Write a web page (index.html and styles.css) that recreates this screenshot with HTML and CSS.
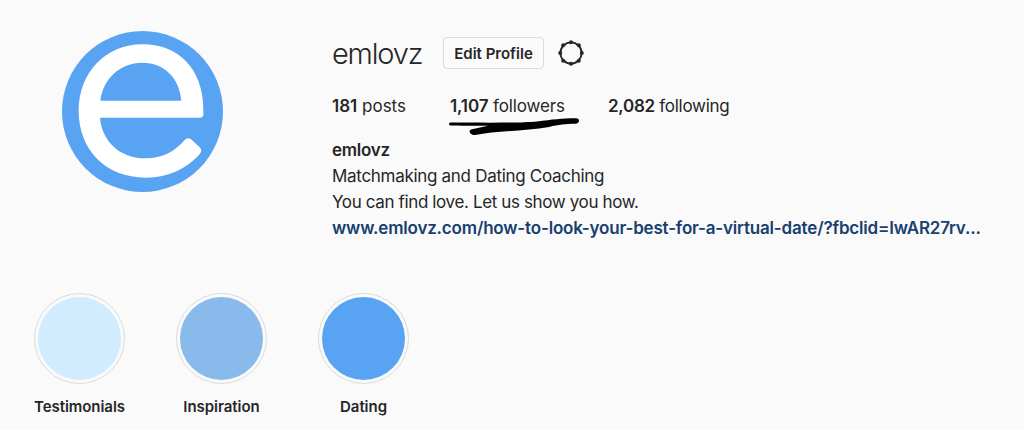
FILE: index.html
```
<!DOCTYPE html>
<html lang="en">
<head>
    <meta charset="UTF-8">
    <meta name="viewport" content="width=device-width, initial-scale=1.0">
    <title>emlovz</title>
    <link rel="stylesheet" href="styles.css">
</head>
<body>
    <header class="profile">
        <svg class="avatar" viewBox="0 0 483 483">
            <circle cx="241.5" cy="241.5" r="241.5" fill="#59a4f2"/>
            <path fill="#fff" fill-rule="evenodd" d="M114 260H415Q424 260 424 250V235C424 115 350 40 243 40C130 40 50 125 50 240C50 355 130 440 252 440C320 440 375 412 414 368Q422 357 413 349L387 325Q377 317 368 327C337 362 303 382 250 382C175 382 120 332 114 260ZM115 209C123 145 173 95 240 95C308 95 353 142 358 209Z"/>
        </svg>
        <section class="info">
            <div class="title-row">
                <h1 class="username">emlovz</h1>
                <button class="edit-button">Edit Profile</button>
                <svg class="settings" viewBox="0 0 26 26">
                    <circle cx="13" cy="13" r="10.6" fill="none" stroke="#262626" stroke-width="1.8"/>
                    <g fill="#262626">
                        <circle cx="13" cy="2.200" r="2"/>
                        <circle cx="20.8" cy="5.2" r="2"/>
                        <circle cx="23.8" cy="13" r="2"/>
                        <circle cx="20.8" cy="20.8" r="2"/>
                        <circle cx="13" cy="23.8" r="2"/>
                        <circle cx="5.2" cy="20.8" r="2"/>
                        <circle cx="2.200" cy="13" r="2"/>
                        <circle cx="5.2" cy="5.2" r="2"/>
                    </g>
                </svg>
            </div>
            <ul class="stats">
                <li class="posts"><b>181</b> posts</li>
                <li class="followers"><b>1,107</b> followers
                    <svg class="scribble" viewBox="0 0 140 24">
                        <path d="M5 7.600C35 7.600 75 8.200 92 6.500C108 4.500 116 3.500 131 3.300C135 3.500 135 8 131 8.800C120 9 114 9.500 104 12C80 16 50 16 30 20C25 20.500 23 16 26 14.500L43 10.700C28 10.600 14 10.600 5 10.400Q3 9 5 7.600Z"/>
                    </svg>
                </li>
                <li class="following"><b>2,082</b> following</li>
            </ul>
            <div class="bio">
                <h2 class="name">emlovz</h2>
                <p class="about">Matchmaking and Dating Coaching</p>
                <p class="tagline">You can find love. Let us show you how.</p>
                <a class="link">www.emlovz.com/how-to-look-your-best-for-a-virtual-date/?fbclid=IwAR27rv...</a>
            </div>
        </section>
    </header>
    <div class="highlights">
        <div class="highlight">
            <div class="ring"><div class="cover testimonials"></div></div>
            <p>Testimonials</p>
        </div>
        <div class="highlight">
            <div class="ring"><div class="cover inspiration"></div></div>
            <p>Inspiration</p>
        </div>
        <div class="highlight">
            <div class="ring"><div class="cover dating"></div></div>
            <p>Dating</p>
        </div>
    </div>
</body>
</html>
```
FILE: styles.css
```
* {
    box-sizing: border-box;
    margin: 0;
    padding: 0;
}
body {
    background: #fafafa;
    color: #262626;
    font-family: Inter, "Liberation Sans", sans-serif;
    font-size: 17px;
    height: 430px;
    overflow: hidden;
}
.profile {
    display: flex;
    padding: 31px 0 0 62px;
    height: 293px;
}
.avatar {
    width: 161px;
    height: 161px;
    margin-right: 109px;
    flex: none;
}
.title-row {
    display: flex;
    align-items: center;
    height: 44px;
}
.username {
    width: 111px;
    padding-top: 2px;
    font-size: 29px;
    font-weight: 300;
    line-height: 44px;
    letter-spacing: -1.2px;
}
.edit-button {
    width: 101px;
    height: 32px;
    margin-right: 14px;
    border: 1px solid #dbdbdb;
    border-radius: 4px;
    background: transparent;
    color: #262626;
    font-family: inherit;
    font-size: 15px;
    font-weight: 600;
    white-space: nowrap;
}
.settings {
    width: 26px;
    height: 26px;
}
.stats {
    display: flex;
    list-style: none;
    margin-top: 18px;
    line-height: 26px;
    white-space: nowrap;
}
.stats b {
    font-weight: 600;
}
.posts {
    width: 118px;
}
.followers {
    position: relative;
    width: 158px;
    letter-spacing: -0.12px;
}
.following {
    letter-spacing: -0.28px;
}
.scribble {
    position: absolute;
    left: -5px;
    top: 22px;
    width: 140px;
    height: 24px;
}
.bio {
    margin-top: 18px;
    line-height: 26px;
    white-space: nowrap;
}
.name {
    font-size: 17px;
    font-weight: 600;
    letter-spacing: -0.25px;
}
.about {
    letter-spacing: -0.3px;
}
.tagline {
    letter-spacing: -0.37px;
}
.link {
    color: #17406f;
    font-weight: 600;
    letter-spacing: -0.18px;
}
.highlights {
    display: flex;
    gap: 22px;
    padding-left: 19px;
}
.highlight {
    width: 121px;
    margin-right: -1px;
    text-align: center;
}
.ring {
    width: 91px;
    height: 91px;
    margin: 0 auto;
    padding: 3px;
    border: 1px solid #dbdbdb;
    border-radius: 50%;
}
.cover {
    height: 100%;
    border-radius: 50%;
}
.testimonials {
    background: #d0ecfe;
}
.inspiration {
    background: #88bbec;
}
.dating {
    background: #59a4f2;
}
.highlight p {
    margin-top: 13px;
    font-size: 15px;
    font-weight: 600;
    line-height: 20px;
    letter-spacing: -0.05px;
}
```
